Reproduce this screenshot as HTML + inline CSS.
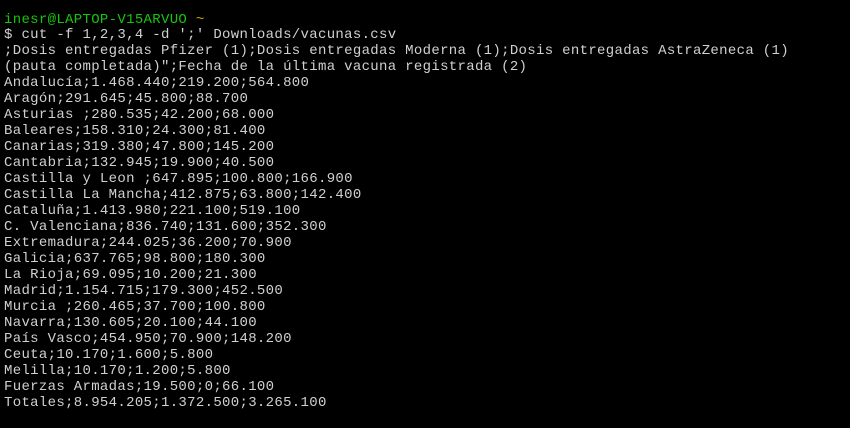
<!DOCTYPE html>
<html><head><meta charset="utf-8"><style>
html,body{margin:0;padding:0;background:#000;width:850px;height:428px;overflow:hidden}
pre{margin:0;position:absolute;left:4px;top:11.5px;font-family:"Liberation Mono",monospace;font-size:14px;letter-spacing:0.32px;line-height:15.98px;color:#d0d0d0}
.g{color:#16c60c}.y{color:#c1a100}
</style></head><body><pre><span class="g">inesr@LAPTOP-V15ARVUO</span> <span class="y">~</span>
$ cut -f 1,2,3,4 -d ';' Downloads/vacunas.csv
;Dosis entregadas Pfizer (1);Dosis entregadas Moderna (1);Dosis entregadas AstraZeneca (1)
(pauta completada)";Fecha de la última vacuna registrada (2)
Andalucía;1.468.440;219.200;564.800
Aragón;291.645;45.800;88.700
Asturias ;280.535;42.200;68.000
Baleares;158.310;24.300;81.400
Canarias;319.380;47.800;145.200
Cantabria;132.945;19.900;40.500
Castilla y Leon ;647.895;100.800;166.900
Castilla La Mancha;412.875;63.800;142.400
Cataluña;1.413.980;221.100;519.100
C. Valenciana;836.740;131.600;352.300
Extremadura;244.025;36.200;70.900
Galicia;637.765;98.800;180.300
La Rioja;69.095;10.200;21.300
Madrid;1.154.715;179.300;452.500
Murcia ;260.465;37.700;100.800
Navarra;130.605;20.100;44.100
País Vasco;454.950;70.900;148.200
Ceuta;10.170;1.600;5.800
Melilla;10.170;1.200;5.800
Fuerzas Armadas;19.500;0;66.100
Totales;8.954.205;1.372.500;3.265.100</pre></body></html>
